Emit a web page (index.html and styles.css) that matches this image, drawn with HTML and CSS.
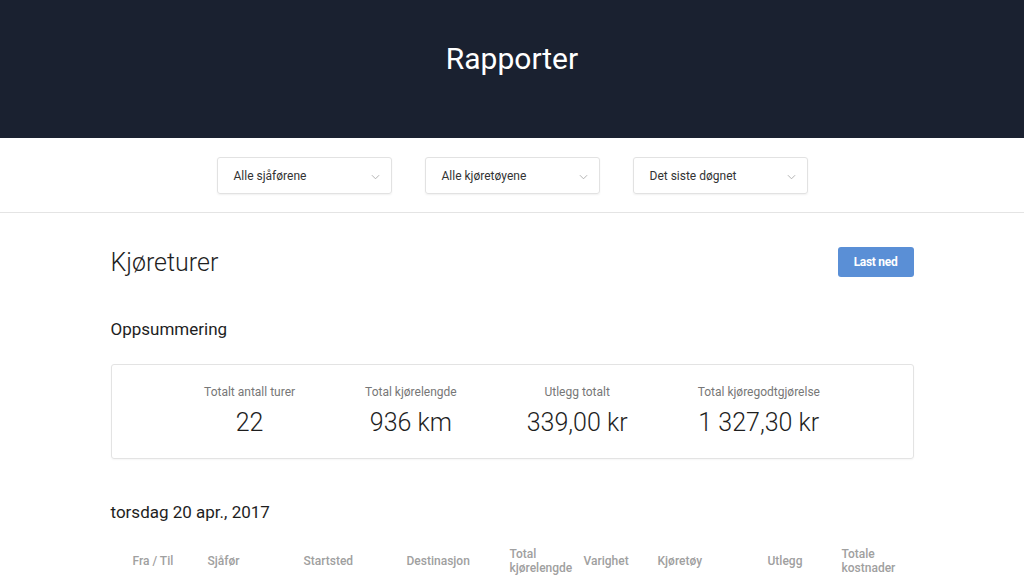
FILE: index.html
```html
<!DOCTYPE html>
<html lang="no">
<head>
<meta charset="utf-8">
<title>Rapporter</title>
<link rel="stylesheet" href="styles.css">
</head>
<body>
<header class="topbar">
  <h1 class="topbar-title">Rapporter</h1>
</header>
<div class="filters">
  <div class="select"><span>Alle sjåførene</span><svg class="chev" viewBox="0 0 10 6" width="9" height="6"><path d="M1 1l4 4 4-4" fill="none" stroke="#aaa" stroke-width="1"/></svg></div>
  <div class="select"><span>Alle kjøretøyene</span><svg class="chev" viewBox="0 0 10 6" width="9" height="6"><path d="M1 1l4 4 4-4" fill="none" stroke="#aaa" stroke-width="1"/></svg></div>
  <div class="select"><span>Det siste døgnet</span><svg class="chev" viewBox="0 0 10 6" width="9" height="6"><path d="M1 1l4 4 4-4" fill="none" stroke="#aaa" stroke-width="1"/></svg></div>
</div>
<main class="content">
  <div class="title-row">
    <h2 class="page-title">Kjøreturer</h2>
    <button class="btn">Last ned</button>
  </div>
  <h3 class="section-title">Oppsummering</h3>
  <div class="summary">
    <div class="stat"><div class="stat-label">Totalt antall turer</div><div class="stat-value">22</div></div>
    <div class="stat"><div class="stat-label">Total kjørelengde</div><div class="stat-value">936 km</div></div>
    <div class="stat"><div class="stat-label">Utlegg totalt</div><div class="stat-value">339,00 kr</div></div>
    <div class="stat"><div class="stat-label">Total kjøregodtgjørelse</div><div class="stat-value">1 327,30 kr</div></div>
  </div>
  <h3 class="section-title date-title">torsdag 20 apr., 2017</h3>
  <div class="thead">
    <div class="th first">Fra / Til</div>
    <div class="th">Sjåfør</div>
    <div class="th">Startsted</div>
    <div class="th">Destinasjon</div>
    <div class="th">Total<br>kjørelengde</div>
    <div class="th">Varighet</div>
    <div class="th">Kjøretøy</div>
    <div class="th">Utlegg</div>
    <div class="th">Totale<br>kostnader</div>
  </div>
</main>
</body>
</html>
```
FILE: styles.css
```css
* { box-sizing: border-box; }
html, body { margin: 0; padding: 0; }
body {
  font-family: Roboto, "Liberation Sans", sans-serif;
  color: #222;
  background: #fff;
  overflow: hidden;
}
.topbar {
  height: 138px;
  background: #1a2130;
  display: flex;
  align-items: center;
  justify-content: center;
}
.topbar-title {
  margin: 0 0 22px 0;
  color: #fff;
  font-size: 30px;
  font-weight: 400;
}
.filters {
  height: 75px;
  border-bottom: 1px solid #e4e4e4;
  display: flex;
  justify-content: center;
  align-items: flex-start;
  gap: 33px;
  padding-top: 19px;
}
.select {
  width: 175px;
  height: 37px;
  border: 1px solid #e2e2e2;
  border-radius: 3px;
  box-shadow: 0 1px 2px rgba(0,0,0,0.06);
  display: flex;
  align-items: center;
  justify-content: space-between;
  padding: 0 11px 0 16px;
  font-size: 12px;
  color: #333;
}
.chev { margin-top: 2px; }
.content {
  width: 803px;
  margin: 0 auto;
}
.title-row {
  display: flex;
  justify-content: space-between;
  align-items: center;
  margin-top: 34px;
  height: 30px;
}
.page-title {
  margin: 0;
  font-size: 25px;
  font-weight: 300;
  color: #1e1e1e;
}
.btn {
  width: 76px;
  height: 30px;
  background: #5a8fd6;
  color: #fff;
  border: none;
  border-radius: 3px;
  font-family: Roboto, "Liberation Sans", sans-serif;
  font-weight: 700;
  font-size: 12px;
  letter-spacing: -0.3px;
}
.section-title {
  margin: 42px 0 0 0;
  font-size: 17px;
  font-weight: 400;
  color: #1e1e1e;
  line-height: 20px;
}
.summary {
  margin-top: 25px;
  height: 95px;
  border: 1px solid #e3e3e3;
  border-radius: 3px;
  box-shadow: 0 1px 2px rgba(0,0,0,0.04);
  display: flex;
  justify-content: center;
  gap: 70px;
  padding-top: 19px;
}
.stat { text-align: center; }
.stat-label {
  font-size: 12px;
  color: #777;
  line-height: 16px;
}
.stat-value {
  margin-top: 8px;
  font-size: 25px;
  font-weight: 300;
  color: #1e1e1e;
  line-height: 30px;
}
.date-title { margin-top: 43px; }
.thead {
  margin-top: 21px;
  display: grid;
  grid-template-columns: 97px 96px 103px 103px 74px 74px 110px 74px 72px;
  align-items: center;
  height: 36px;
}
.th {
  font-size: 12px;
  font-weight: 500;
  color: #a0a0a0;
  line-height: 14px;
}
.th.first { padding-left: 22px; }
```
